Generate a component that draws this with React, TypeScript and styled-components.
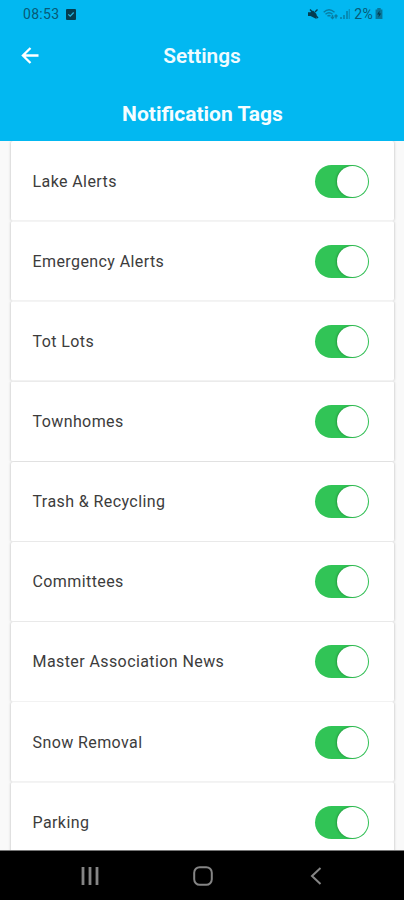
import React, { useState } from "react";
import styled, { createGlobalStyle } from "styled-components";

const GlobalStyle = createGlobalStyle`
  * { box-sizing: border-box; }
  body { margin: 0; background: #f9f9f9; font-family: Roboto, "Liberation Sans", sans-serif; }
`;

const Screen = styled.div`
  width: 404px;
  height: 900px;
  display: flex;
  flex-direction: column;
  overflow: hidden;
  background: #f9f9f9;
`;

const Header = styled.header`
  flex: 0 0 141px;
  display: flex;
  flex-direction: column;
  background: #02b8f1;
`;

const StatusBar = styled.div`
  height: 28px;
  padding: 0 21px 0 23px;
  display: flex;
  align-items: center;
  justify-content: space-between;
  color: #075a77;
`;

const StatusGroup = styled.div<{ $gap: number }>`
  display: flex;
  align-items: center;
  gap: ${(p) => p.$gap}px;
`;

const StatusText = styled.span<{ $spacing?: number }>`
  font-size: 14px;
  line-height: 16px;
  letter-spacing: ${(p) => p.$spacing ?? 0}px;
`;

const TitleBar = styled.div`
  height: 56px;
  display: grid;
  grid-template-columns: 60px 1fr 60px;
  align-items: center;
`;

const BackButton = styled.button`
  width: 60px;
  height: 56px;
  padding: 0 0 1px;
  border: 0;
  background: none;
  color: #fff;
  display: flex;
  align-items: center;
  justify-content: center;
`;

const Title = styled.h1`
  margin: 0;
  color: #effbff;
  font-size: 20.8px;
  line-height: 24px;
  font-weight: 600;
  text-align: center;
`;

const Subtitle = styled.h2`
  margin: 0;
  padding: 18px 0 0 1px;
  color: #f5fdff;
  font-size: 21px;
  line-height: 24px;
  font-weight: 700;
  text-align: center;
`;

const List = styled.main`
  flex: 1;
  min-height: 0;
  overflow: hidden;
  padding: 0 10px 0 11px;
`;

const Row = styled.label`
  height: 80.15px;
  padding: 0 25px 0 21.5px;
  display: flex;
  align-items: center;
  justify-content: space-between;
  background: #fff;
  border-radius: 2px;
  border-bottom: 1px solid #f2f2f2;
  box-shadow: 0 0 3px rgba(0, 0, 0, 0.28);
  clip-path: inset(0 -4px);
`;

const Label = styled.span`
  padding-top: 2px;
  color: #3c3c3c;
  font-size: 16px;
  line-height: 20px;
  font-weight: 400;
  letter-spacing: 0.41px;
`;

const Toggle = styled.button<{ $on: boolean }>`
  width: 54px;
  height: 33px;
  margin-top: 1px;
  padding: 1px;
  border: 0;
  border-radius: 17px;
  display: flex;
  justify-content: ${(p) => (p.$on ? "flex-end" : "flex-start")};
  background: ${(p) => (p.$on ? "#31c456" : "#dddddd")};
`;

const Knob = styled.span`
  width: 31px;
  height: 31px;
  border-radius: 50%;
  background: #fff;
  box-shadow: -1px 0 2px rgba(0, 60, 10, 0.3);
`;

const NavBar = styled.nav`
  flex: 0 0 50px;
  display: grid;
  grid-template-columns: 60px 60px 166px 60px 58px;
  align-items: center;
  justify-items: center;
  border-top: 1px solid #777;
  background: #000;
  color: #858585;
`;

const NavIcon = styled.svg<{ $column: number }>`
  grid-column: ${(p) => p.$column};
`;

const tags = [
  "Lake Alerts",
  "Emergency Alerts",
  "Tot Lots",
  "Townhomes",
  "Trash & Recycling",
  "Committees",
  "Master Association News",
  "Snow Removal",
  "Parking",
];

function TagRow({ name }: { name: string }) {
  const [on, setOn] = useState(true);
  return (
    <Row>
      <Label>{name}</Label>
      <Toggle $on={on} role="switch" aria-checked={on} aria-label={name} onClick={() => setOn(!on)}>
        <Knob />
      </Toggle>
    </Row>
  );
}

export default function App() {
  return (
    <Screen>
      <GlobalStyle />
      <Header>
        <StatusBar>
          <StatusGroup $gap={7}>
            <StatusText $spacing={0.3}>08:53</StatusText>
            <svg width="10" height="11" viewBox="0 0 10 11">
              <rect width="10" height="11" rx="1" fill="#043c50" />
              <path d="M2.3 5.4 4.2 7.2 7.7 3.5" fill="none" stroke="#26b4df" strokeWidth="1.3" />
            </svg>
          </StatusGroup>
          <StatusGroup $gap={4}>
            <svg width="12" height="12" viewBox="0 0 12 12">
              <path d="M1 4.2h2.5L6 2.5 9.5 6v5L6.5 9.5 3.5 8H1z" fill="#043c50" />
              <path d="M3 1.5 11 10M8 4l2.5-2.5" stroke="#043c50" strokeWidth="1.4" />
            </svg>
            <StatusGroup $gap={0}>
              <svg width="16" height="12" viewBox="0 0 16 12" fill="none" stroke="#087da3" strokeWidth="1.4">
                <path d="M.7 4.2Q6-.8 11.5 4.2M2.5 6.2q3.5-3 7 0M4.5 8.2q1.5-1.4 3 0" />
                <path d="M9.5 10.5V7M8 9l1.5 1.5L11 9M13 7v3.5M11.5 8.5 13 7l1.5 1.5" />
              </svg>
              <svg width="11" height="12" viewBox="0 0 11 12" stroke="#087da3" strokeWidth="1.5">
                <path d="M2 11V9M5 11V7M8 11V3" />
                <path d="M10.4 11V1" opacity=".6" />
              </svg>
            </StatusGroup>
            <StatusGroup $gap={2}>
              <StatusText $spacing={0.3}>2%</StatusText>
              <svg width="8" height="12" viewBox="0 0 7 12" preserveAspectRatio="none">
                <path d="M2 0h3v1.5h1.5V11h-6V1.5H2z" fill="#08779b" />
                <path d="M4 2.5 1.8 6.5h1.6L3 9.5l2.4-4H3.8z" fill="#043c50" />
              </svg>
            </StatusGroup>
          </StatusGroup>
        </StatusBar>
        <TitleBar>
          <BackButton aria-label="Back">
            <svg width="18" height="18" viewBox="0 0 18 18" fill="none" stroke="currentColor" strokeWidth="2.3">
              <path d="M17.5 8.5H2M9.5 1 1.9 8.5 9.5 16" />
            </svg>
          </BackButton>
          <Title>Settings</Title>
        </TitleBar>
        <Subtitle>Notification Tags</Subtitle>
      </Header>
      <List>
        {tags.map((name) => (
          <TagRow key={name} name={name} />
        ))}
      </List>
      <NavBar>
        <NavIcon $column={2} width="18" height="18" viewBox="0 0 18 18" stroke="currentColor" strokeWidth="2.8">
          <path d="M2 0v18M9 0v18M16 0v18" />
        </NavIcon>
        <NavIcon $column={3} width="20" height="20" viewBox="0 0 20 20" fill="none" stroke="currentColor" strokeWidth="2">
          <rect x="1.2" y="1.2" width="17.6" height="17.6" rx="5.5" />
        </NavIcon>
        <NavIcon $column={4} width="12" height="18" viewBox="0 0 12 18" fill="none" stroke="currentColor" strokeWidth="2">
          <path d="M10.5 1 2 9l8.5 8" />
        </NavIcon>
      </NavBar>
    </Screen>
  );
}
